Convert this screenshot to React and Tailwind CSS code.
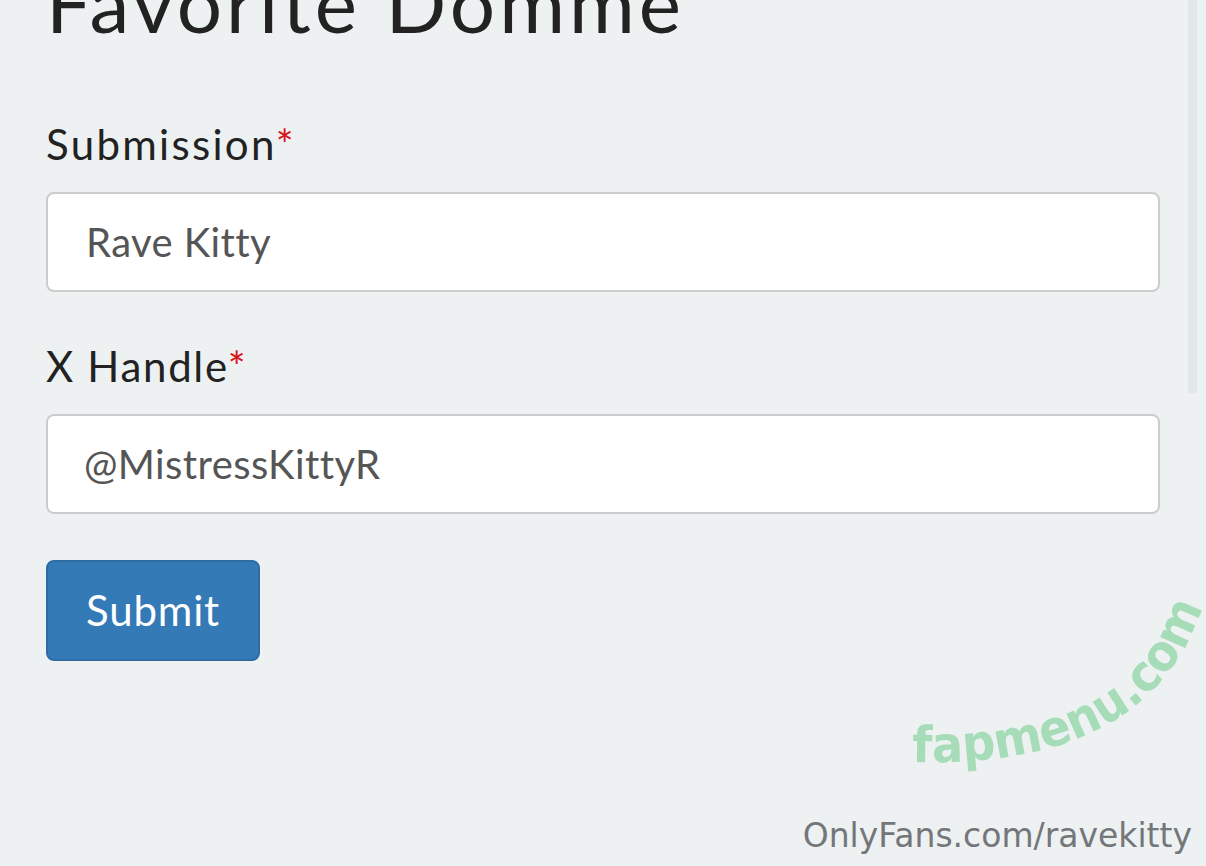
export default function App() {
  return (
    <div className="relative w-[1206px] h-[866px] overflow-hidden bg-[#edf1f2] flex" style={{ fontFamily: "Lato, 'Noto Sans', sans-serif" }}>
      <div className="flex-1 flex flex-col pl-[46px] pr-[28px]">
        <h1 className="mt-[-38px] text-[80px] leading-[80px] tracking-[0.05em] text-[#222]">Favorite Domme</h1>
        <label className="mt-[78px] text-[42px] leading-[48px] tracking-[0.055em] text-[#222]">
          Submission<span className="text-[#d9141c]">*</span>
        </label>
        <div className="mt-[24px] h-[100px] border-2 border-[#cbcccc] rounded-[8px] bg-white flex items-center pl-[38px] text-[40px] text-[#555] tracking-[0.01em]">
          Rave Kitty
        </div>
        <label className="mt-[50px] text-[42px] leading-[48px] tracking-[0.04em] text-[#222]">
          X Handle<span className="text-[#d9141c]">*</span>
        </label>
        <div className="mt-[24px] h-[100px] border-2 border-[#cbcccc] rounded-[8px] bg-white flex items-center pl-[36px] text-[40px] text-[#555] tracking-[0.01em]">
          @MistressKittyR
        </div>
        <div className="mt-[46px]">
          <button className="w-[214px] h-[101px] bg-[#337ab7] border-2 border-[#2e6da4] rounded-[8px] text-white text-[42px] tracking-[0.02em]">
            Submit
          </button>
        </div>
      </div>
      <div className="w-[9px] h-[393px] bg-[#e2e7e8] mr-[9px]" />

      <svg className="absolute left-0 top-0 pointer-events-none" width="1206" height="866">
        <path id="wm" d="M 912 762 C 1030 765 1160 740 1203 604" fill="none" />
        <text fill="#a6dcb8" fontFamily="'DejaVu Sans', 'Liberation Sans', sans-serif" fontWeight="bold" fontSize="50">
          <textPath href="#wm" textLength="356" lengthAdjust="spacingAndGlyphs">fapmenu.com</textPath>
        </text>
      </svg>
      <div className="absolute right-[14px] bottom-[14px] text-[33px] leading-none text-[#74777a]" style={{ fontFamily: "'DejaVu Sans', sans-serif" }}>
        OnlyFans.com/ravekitty
      </div>
    </div>
  );
}
